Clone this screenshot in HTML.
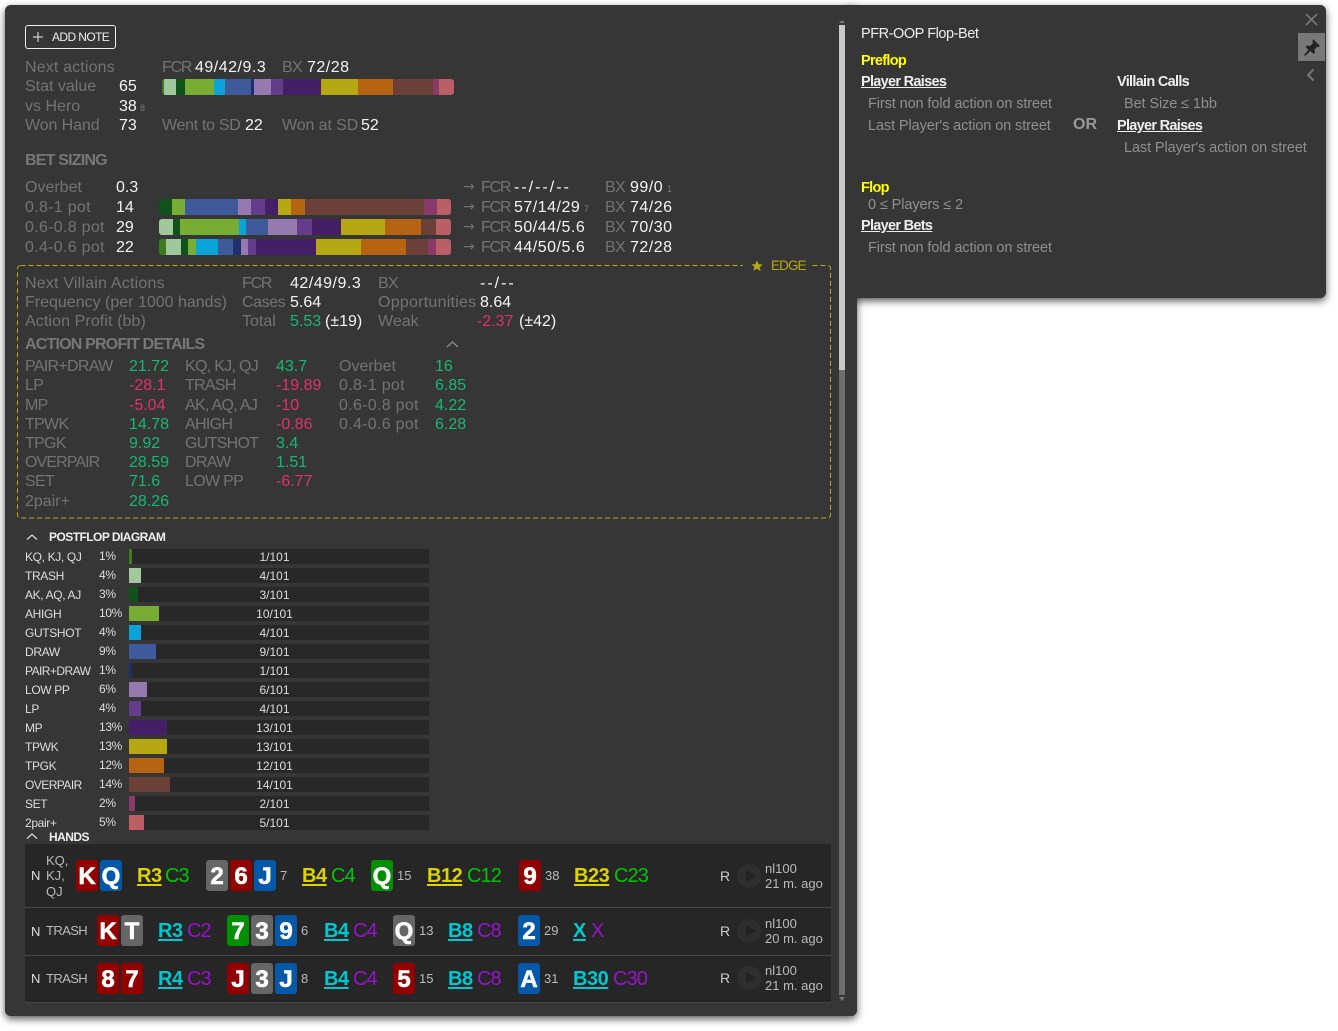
<!DOCTYPE html>
<html><head><meta charset="utf-8"><style>
html,body{margin:0;padding:0;background:#fff;width:1338px;height:1031px;overflow:hidden;font-family:"Liberation Sans",sans-serif}
.p{position:absolute;background:#363636}
.a,.t,.g,.w,.r,.n,.h,.l,.c,.k{position:absolute;white-space:nowrap;line-height:20px;height:20px}
.t,.g,.w,.r,.n{font-size:16px}
.g,.w,.r,.n,.h{margin-top:1px}
.g{color:#737373}.w{color:#f4f4f4}.r{color:#e0316c}.n{color:#16b873}
.q{letter-spacing:-.7px}.fc{letter-spacing:-1.2px}.x{letter-spacing:.5px}.o{letter-spacing:.3px}.da{letter-spacing:2px}
.ar{font-family:"DejaVu Sans",sans-serif;font-size:14px}
.h{font-size:16px;font-weight:bold;color:#777;letter-spacing:-.8px}
.l{font-size:12px;color:#ddd;letter-spacing:-.35px;margin-top:-1px}
.m{margin-top:0}
.hd{font-weight:bold;color:#eee;letter-spacing:-.55px;margin-top:0}
.a{background:#282828;height:15px;left:129px;width:300px}
.a i{position:absolute;left:0;top:0;height:15px;display:block}
.a span{position:absolute;left:0;width:291px;text-align:center;font-size:12px;line-height:17px;color:#ddd}
.b{position:absolute;height:16px;border-radius:3px;overflow:hidden;display:flex}
.b i{display:block;height:16px}
.c{width:22px;height:31px;line-height:33px;border-radius:3px;color:#fff;text-align:center;font-weight:bold;font-size:24px;-webkit-text-stroke:.6px #fff}
.cr{background:#930000}.cb{background:#0359a8}.cy{background:#666}.cg{background:#009000}
.k{font-size:20px;letter-spacing:-.5px}
.u{text-decoration:underline;font-weight:bold;text-underline-offset:2px}
.Y{color:#dcd400}.G{color:#00c800;letter-spacing:-.9px}.C{color:#00c8d0}.V{color:#9a10d0;letter-spacing:-.9px}
.s{position:absolute;white-space:nowrap;font-size:13px;line-height:16px;color:#bbb}
.d{position:absolute;left:737px;width:24px;height:24px;border-radius:12px;background:#2e2e2e}
.d:after{content:"";position:absolute;left:9px;top:6px;border-left:10px solid #222;border-top:6px solid transparent;border-bottom:6px solid transparent}
.R{position:absolute;white-space:nowrap;font-size:14.5px;line-height:20px;color:#8f8f8f;letter-spacing:-.1px;margin-top:1px}
.RB{position:absolute;white-space:nowrap;font-size:14.5px;line-height:20px;color:#eee;font-weight:bold;letter-spacing:-.7px;margin-top:1px}
</style></head><body>

<div class="p" style="left:5px;top:5px;width:852px;height:1011px;border-radius:6px;box-shadow:0 3px 8px rgba(0,0,0,.65)"></div>
<div class="p" style="left:846px;top:5px;width:480px;height:293px;border-radius:0 6px 6px 0;box-shadow:0 3px 8px rgba(0,0,0,.65)"></div>
<div class="p" style="left:5px;top:5px;width:852px;height:1011px;border-radius:6px"></div>
<div class="p" style="left:846px;top:5px;width:480px;height:293px;border-radius:0 6px 6px 0"></div>

<!-- scrollbar -->
<div style="position:absolute;left:839px;top:25px;width:6px;height:345px;background:#c8c8c8"></div>
<div style="position:absolute;left:839px;top:370px;width:6px;height:625px;background:#6e6e6e"></div>
<div style="position:absolute;left:839px;top:20px;border-left:3px solid transparent;border-right:3px solid transparent;border-bottom:3px solid #777"></div>
<div style="position:absolute;left:839px;top:997px;border-left:3px solid transparent;border-right:3px solid transparent;border-top:4px solid #777"></div>

<!-- add note -->
<div style="position:absolute;left:25px;top:25px;width:89px;height:22px;border:1px solid #eee;border-radius:3px"></div>
<svg style="position:absolute;left:32px;top:31px" width="12" height="12"><path d="M6 1v10M1 6h10" stroke="#ccc" stroke-width="1.2"/></svg>
<div class="t" style="left:52px;top:27px;font-size:12px;color:#eee;letter-spacing:-.6px">ADD NOTE</div>

<div class="g" style="left:25px;top:57px;letter-spacing:.15px">Next actions</div>
<div class="g" style="left:25px;top:76px">Stat value</div>
<div class="g" style="left:25px;top:96px">vs Hero</div>
<div class="g" style="left:25px;top:115px;letter-spacing:-.1px">Won Hand</div>
<div class="w" style="left:119px;top:76px">65</div>
<div class="w" style="left:119px;top:96px">38</div>
<div class="t" style="left:140px;top:98px;font-size:9px;color:#777">8</div>
<div class="w" style="left:119px;top:115px">73</div>
<div class="g fc" style="left:162px;top:57px">FCR</div><div class="w x" style="left:195px;top:57px">49/42/9.3</div>
<div class="g q" style="left:282px;top:57px">BX</div><div class="w x" style="left:307px;top:57px">72/28</div>
<div class="g" style="left:162px;top:115px;letter-spacing:-.3px">Went to SD</div><div class="w" style="left:245px;top:115px">22</div>
<div class="g" style="left:282px;top:115px;letter-spacing:-.1px">Won at SD</div><div class="w" style="left:361px;top:115px">52</div>

<div class="b" style="left:162px;top:79px;width:292px">
<i style="width:2px;background:#3d7c1e"></i><i style="width:12px;background:#a0c89c"></i><i style="width:9px;background:#10521a"></i><i style="width:29px;background:#77ad32"></i><i style="width:11px;background:#0aa4d9"></i><i style="width:26px;background:#3f5a9b"></i><i style="width:3px;background:#1f2f6e"></i><i style="width:17px;background:#9679ae"></i><i style="width:12px;background:#633c8a"></i><i style="width:38px;background:#441e66"></i><i style="width:37px;background:#b5a812"></i><i style="width:35px;background:#b76412"></i><i style="width:40px;background:#6a4038"></i><i style="width:6px;background:#8a3a68"></i><i style="width:15px;background:#bb5f66"></i>
</div>

<div class="h" style="left:25px;top:150px">BET SIZING</div>
<div class="g" style="left:25px;top:177px">Overbet</div><div class="w" style="left:116px;top:177px">0.3</div>
<div class="g o" style="left:25px;top:197px">0.8-1 pot</div><div class="w" style="left:116px;top:197px">14</div>
<div class="g o" style="left:25px;top:217px">0.6-0.8 pot</div><div class="w" style="left:116px;top:217px">29</div>
<div class="g o" style="left:25px;top:237px">0.4-0.6 pot</div><div class="w" style="left:116px;top:237px">22</div>

<div class="b" style="left:159px;top:199px;width:292px">
<i style="width:13px;background:#10521a"></i><i style="width:13px;background:#77ad32"></i><i style="width:53px;background:#3f5a9b"></i><i style="width:13px;background:#9679ae"></i><i style="width:14px;background:#633c8a"></i><i style="width:13px;background:#441e66"></i><i style="width:13px;background:#b5a812"></i><i style="width:14px;background:#b76412"></i><i style="width:119px;background:#6a4038"></i><i style="width:13px;background:#8a3a68"></i><i style="width:14px;background:#bb5f66"></i>
</div>
<div class="b" style="left:159px;top:219px;width:292px">
<i style="width:14px;background:#a0c89c"></i><i style="width:7px;background:#10521a"></i><i style="width:59px;background:#77ad32"></i><i style="width:7px;background:#0aa4d9"></i><i style="width:22px;background:#3f5a9b"></i><i style="width:29px;background:#9679ae"></i><i style="width:15px;background:#633c8a"></i><i style="width:29px;background:#441e66"></i><i style="width:44px;background:#b5a812"></i><i style="width:36px;background:#b76412"></i><i style="width:15px;background:#6a4038"></i><i style="width:15px;background:#bb5f66"></i>
</div>
<div class="b" style="left:159px;top:239px;width:292px">
<i style="width:7px;background:#3d7c1e"></i><i style="width:15px;background:#a0c89c"></i><i style="width:7px;background:#10521a"></i><i style="width:8px;background:#77ad32"></i><i style="width:22px;background:#0aa4d9"></i><i style="width:15px;background:#3f5a9b"></i><i style="width:8px;background:#1f2f6e"></i><i style="width:7px;background:#9679ae"></i><i style="width:8px;background:#633c8a"></i><i style="width:60px;background:#441e66"></i><i style="width:45px;background:#b5a812"></i><i style="width:45px;background:#b76412"></i><i style="width:22px;background:#6a4038"></i><i style="width:8px;background:#8a3a68"></i><i style="width:15px;background:#bb5f66"></i>
</div>

<div class="g ar" style="left:463px;top:176px">→</div><div class="g fc" style="left:481px;top:177px">FCR</div><div class="w da" style="left:514px;top:177px">--/--/--</div>
<div class="g ar" style="left:463px;top:196px">→</div><div class="g fc" style="left:481px;top:197px">FCR</div><div class="w x" style="left:514px;top:197px">57/14/29</div>
<div class="t" style="left:584px;top:199px;font-size:9px;color:#777">7</div>
<div class="g ar" style="left:463px;top:216px">→</div><div class="g fc" style="left:481px;top:217px">FCR</div><div class="w x" style="left:514px;top:217px">50/44/5.6</div>
<div class="g ar" style="left:463px;top:236px">→</div><div class="g fc" style="left:481px;top:237px">FCR</div><div class="w x" style="left:514px;top:237px">44/50/5.6</div>
<div class="g q" style="left:605px;top:177px">BX</div><div class="w x" style="left:630px;top:177px">99/0</div>
<div class="t" style="left:667px;top:179px;font-size:9px;color:#777">1</div>
<div class="g q" style="left:605px;top:197px">BX</div><div class="w x" style="left:630px;top:197px">74/26</div>
<div class="g q" style="left:605px;top:217px">BX</div><div class="w x" style="left:630px;top:217px">70/30</div>
<div class="g q" style="left:605px;top:237px">BX</div><div class="w x" style="left:630px;top:237px">72/28</div>

<!-- edge box -->
<svg style="position:absolute;left:0;top:0" width="840" height="530"><rect x="17.500" y="265.500" width="813" height="252.500" rx="3" fill="none" stroke="#b5a812" stroke-dasharray="5 3"/></svg>
<div class="p" style="left:743px;top:258px;width:69px;height:16px"></div>
<svg style="position:absolute;left:751px;top:260px" width="12" height="12" viewBox="0 0 12 12"><path d="M6 .5l1.700 3.600 3.900.5-2.900 2.700.8 3.900L6 8.800l-3.500 1.900.8-3.900L.4 4.600l3.900-.5z" fill="#b5a812"/></svg>
<div class="t" style="left:771px;top:256px;font-size:13.5px;color:#b5a812;letter-spacing:-.9px">EDGE</div>

<div class="g" style="left:25px;top:273px;letter-spacing:.2px">Next Villain Actions</div>
<div class="g" style="left:25px;top:292px">Frequency (per 1000 hands)</div>
<div class="g" style="left:25px;top:311px;letter-spacing:.1px">Action Profit (bb)</div>
<div class="g fc" style="left:242px;top:273px">FCR</div><div class="w x" style="left:290px;top:273px">42/49/9.3</div>
<div class="g" style="left:242px;top:292px;letter-spacing:-.4px">Cases</div><div class="w" style="left:290px;top:292px">5.64</div>
<div class="g" style="left:242px;top:311px">Total</div><div class="n" style="left:290px;top:311px">5.53</div><div class="w" style="left:325px;top:311px">(±19)</div>
<div class="g q" style="left:378px;top:273px">BX</div><div class="w da" style="left:480px;top:273px">--/--</div>
<div class="g" style="left:378px;top:292px;letter-spacing:.25px">Opportunities</div><div class="w" style="left:480px;top:292px">8.64</div>
<div class="g" style="left:378px;top:311px">Weak</div><div class="r" style="left:477px;top:311px">-2.37</div><div class="w" style="left:519px;top:311px">(±42)</div>

<div class="h" style="left:25px;top:334px">ACTION PROFIT DETAILS</div>
<svg style="position:absolute;left:446px;top:340px" width="13" height="9"><path d="M1 7l5.500-5 5.500 5" fill="none" stroke="#888" stroke-width="1.500"/></svg>

<div class="g q" style="left:25px;top:356px">PAIR+DRAW</div><div class="n" style="left:129px;top:356px">21.72</div>
<div class="g q" style="left:25px;top:375px">LP</div><div class="r" style="left:129px;top:375px">-28.1</div>
<div class="g q" style="left:25px;top:395px">MP</div><div class="r" style="left:129px;top:395px">-5.04</div>
<div class="g q" style="left:25px;top:414px">TPWK</div><div class="n" style="left:129px;top:414px">14.78</div>
<div class="g q" style="left:25px;top:433px">TPGK</div><div class="n" style="left:129px;top:433px">9.92</div>
<div class="g q" style="left:25px;top:452px;letter-spacing:-.9px">OVERPAIR</div><div class="n" style="left:129px;top:452px">28.59</div>
<div class="g q" style="left:25px;top:471px">SET</div><div class="n" style="left:129px;top:471px">71.6</div>
<div class="g" style="left:25px;top:491px">2pair+</div><div class="n" style="left:129px;top:491px">28.26</div>

<div class="g q" style="left:185px;top:356px">KQ, KJ, QJ</div><div class="n" style="left:276px;top:356px">43.7</div>
<div class="g q" style="left:185px;top:375px">TRASH</div><div class="r" style="left:276px;top:375px">-19.89</div>
<div class="g q" style="left:185px;top:395px">AK, AQ, AJ</div><div class="r" style="left:276px;top:395px">-10</div>
<div class="g q" style="left:185px;top:414px">AHIGH</div><div class="r" style="left:276px;top:414px">-0.86</div>
<div class="g q" style="left:185px;top:433px">GUTSHOT</div><div class="n" style="left:276px;top:433px">3.4</div>
<div class="g q" style="left:185px;top:452px">DRAW</div><div class="n" style="left:276px;top:452px">1.51</div>
<div class="g q" style="left:185px;top:471px">LOW PP</div><div class="r" style="left:276px;top:471px">-6.77</div>

<div class="g" style="left:339px;top:356px">Overbet</div><div class="n" style="left:435px;top:356px">16</div>
<div class="g o" style="left:339px;top:375px">0.8-1 pot</div><div class="n" style="left:435px;top:375px">6.85</div>
<div class="g o" style="left:339px;top:395px">0.6-0.8 pot</div><div class="n" style="left:435px;top:395px">4.22</div>
<div class="g o" style="left:339px;top:414px">0.4-0.6 pot</div><div class="n" style="left:435px;top:414px">6.28</div>

<!-- diagram -->
<svg style="position:absolute;left:26px;top:533px" width="12" height="8"><path d="M1 6.500l5-4.500 5 4.500" fill="none" stroke="#ddd" stroke-width="1.200"/></svg>
<div class="l hd" style="left:49px;top:527px">POSTFLOP DIAGRAM</div>

<div class="l m" style="left:25px;top:547px">KQ, KJ, QJ</div><div class="l" style="left:99px;top:547px">1%</div><div class="a" style="top:549px"><i style="width:3px;background:#3d7c1e"></i><span>1/101</span></div>
<div class="l m" style="left:25px;top:566px">TRASH</div><div class="l" style="left:99px;top:566px">4%</div><div class="a" style="top:568px"><i style="width:12px;background:#a0c89c"></i><span>4/101</span></div>
<div class="l m" style="left:25px;top:585px">AK, AQ, AJ</div><div class="l" style="left:99px;top:585px">3%</div><div class="a" style="top:587px"><i style="width:9px;background:#10521a"></i><span>3/101</span></div>
<div class="l m" style="left:25px;top:604px">AHIGH</div><div class="l" style="left:99px;top:604px">10%</div><div class="a" style="top:606px"><i style="width:30px;background:#77ad32"></i><span>10/101</span></div>
<div class="l m" style="left:25px;top:623px">GUTSHOT</div><div class="l" style="left:99px;top:623px">4%</div><div class="a" style="top:625px"><i style="width:12px;background:#0aa4d9"></i><span>4/101</span></div>
<div class="l m" style="left:25px;top:642px">DRAW</div><div class="l" style="left:99px;top:642px">9%</div><div class="a" style="top:644px"><i style="width:27px;background:#3f5a9b"></i><span>9/101</span></div>
<div class="l m" style="left:25px;top:661px;letter-spacing:-.55px">PAIR+DRAW</div><div class="l" style="left:99px;top:661px">1%</div><div class="a" style="top:663px"><i style="width:3px;background:#1f2f6e"></i><span>1/101</span></div>
<div class="l m" style="left:25px;top:680px">LOW PP</div><div class="l" style="left:99px;top:680px">6%</div><div class="a" style="top:682px"><i style="width:18px;background:#9679ae"></i><span>6/101</span></div>
<div class="l m" style="left:25px;top:699px">LP</div><div class="l" style="left:99px;top:699px">4%</div><div class="a" style="top:701px"><i style="width:12px;background:#633c8a"></i><span>4/101</span></div>
<div class="l m" style="left:25px;top:718px">MP</div><div class="l" style="left:99px;top:718px">13%</div><div class="a" style="top:720px"><i style="width:38px;background:#441e66"></i><span>13/101</span></div>
<div class="l m" style="left:25px;top:737px">TPWK</div><div class="l" style="left:99px;top:737px">13%</div><div class="a" style="top:739px"><i style="width:38px;background:#b5a812"></i><span>13/101</span></div>
<div class="l m" style="left:25px;top:756px">TPGK</div><div class="l" style="left:99px;top:756px">12%</div><div class="a" style="top:758px"><i style="width:35px;background:#b76412"></i><span>12/101</span></div>
<div class="l m" style="left:25px;top:775px;letter-spacing:-.55px">OVERPAIR</div><div class="l" style="left:99px;top:775px">14%</div><div class="a" style="top:777px"><i style="width:41px;background:#6a4038"></i><span>14/101</span></div>
<div class="l m" style="left:25px;top:794px">SET</div><div class="l" style="left:99px;top:794px">2%</div><div class="a" style="top:796px"><i style="width:6px;background:#8a3a68"></i><span>2/101</span></div>
<div class="l m" style="left:25px;top:813px">2pair+</div><div class="l" style="left:99px;top:813px">5%</div><div class="a" style="top:815px"><i style="width:15px;background:#bb5f66"></i><span>5/101</span></div>

<svg style="position:absolute;left:26px;top:832px" width="12" height="8"><path d="M1 6.500l5-4.500 5 4.500" fill="none" stroke="#ddd" stroke-width="1.200"/></svg>
<div class="l hd" style="left:49px;top:827px">HANDS</div>

<!-- hands -->
<div style="position:absolute;left:25px;top:844px;width:806px;height:63px;background:#262626"></div>
<div style="position:absolute;left:25px;top:908px;width:806px;height:47px;background:#262626"></div>
<div style="position:absolute;left:25px;top:956px;width:806px;height:46px;background:#262626"></div>
<div style="position:absolute;left:25px;top:907px;width:806px;height:1px;background:#444"></div>
<div style="position:absolute;left:25px;top:955px;width:806px;height:1px;background:#444"></div>
<div style="position:absolute;left:25px;top:1002px;width:806px;height:1px;background:#444"></div>

<div class="s" style="left:31px;top:868px;color:#ddd">N</div>
<div class="s" style="left:46px;top:853px">KQ,</div><div class="s" style="left:46px;top:868px">KJ,</div><div class="s" style="left:46px;top:884px">QJ</div>
<div class="c cr" style="left:76px;top:860px">K</div><div class="c cb" style="left:100px;top:860px">Q</div>
<div class="k Y u" style="left:137px;top:866px">R3</div><div class="k G" style="left:165px;top:866px">C3</div>
<div class="c cy" style="left:206px;top:860px">2</div><div class="c cr" style="left:230px;top:860px">6</div><div class="c cb" style="left:254px;top:860px">J</div>
<div class="s" style="left:280px;top:868px">7</div>
<div class="k Y u" style="left:302px;top:866px">B4</div><div class="k G" style="left:331px;top:866px">C4</div>
<div class="c cg" style="left:371px;top:860px">Q</div><div class="s" style="left:397px;top:868px">15</div>
<div class="k Y u" style="left:427px;top:866px">B12</div><div class="k G" style="left:467px;top:866px">C12</div>
<div class="c cr" style="left:519px;top:860px">9</div><div class="s" style="left:545px;top:868px">38</div>
<div class="k Y u" style="left:574px;top:866px">B23</div><div class="k G" style="left:614px;top:866px">C23</div>
<div class="s" style="left:720px;top:868px;font-size:14px;color:#ccc">R</div><div class="d" style="top:864px"></div>
<div class="s" style="left:765px;top:861px">nl100</div><div class="s" style="left:765px;top:876px">21 m. ago</div>

<div class="s" style="left:31px;top:924px;color:#ddd">N</div><div class="s" style="left:46px;top:923px;letter-spacing:-.6px">TRASH</div>
<div class="c cr" style="left:97px;top:915px">K</div><div class="c cy" style="left:121px;top:915px">T</div>
<div class="k C u" style="left:158px;top:921px">R3</div><div class="k V" style="left:187px;top:921px">C2</div>
<div class="c cg" style="left:227px;top:915px">7</div><div class="c cy" style="left:251px;top:915px">3</div><div class="c cb" style="left:275px;top:915px">9</div>
<div class="s" style="left:301px;top:923px">6</div>
<div class="k C u" style="left:324px;top:921px">B4</div><div class="k V" style="left:353px;top:921px">C4</div>
<div class="c cy" style="left:393px;top:915px">Q</div><div class="s" style="left:419px;top:923px">13</div>
<div class="k C u" style="left:448px;top:921px">B8</div><div class="k V" style="left:477px;top:921px">C8</div>
<div class="c cb" style="left:518px;top:915px">2</div><div class="s" style="left:544px;top:923px">29</div>
<div class="k C u" style="left:573px;top:921px">X</div><div class="k V" style="left:591px;top:921px">X</div>
<div class="s" style="left:720px;top:923px;font-size:14px;color:#ccc">R</div><div class="d" style="top:919px"></div>
<div class="s" style="left:765px;top:916px">nl100</div><div class="s" style="left:765px;top:931px">20 m. ago</div>

<div class="s" style="left:31px;top:971px;color:#ddd">N</div><div class="s" style="left:46px;top:971px;letter-spacing:-.6px">TRASH</div>
<div class="c cr" style="left:97px;top:963px">8</div><div class="c cr" style="left:121px;top:963px">7</div>
<div class="k C u" style="left:158px;top:969px">R4</div><div class="k V" style="left:187px;top:969px">C3</div>
<div class="c cr" style="left:227px;top:963px">J</div><div class="c cy" style="left:251px;top:963px">3</div><div class="c cb" style="left:275px;top:963px">J</div>
<div class="s" style="left:301px;top:971px">8</div>
<div class="k C u" style="left:324px;top:969px">B4</div><div class="k V" style="left:353px;top:969px">C4</div>
<div class="c cr" style="left:393px;top:963px">5</div><div class="s" style="left:419px;top:971px">15</div>
<div class="k C u" style="left:448px;top:969px">B8</div><div class="k V" style="left:477px;top:969px">C8</div>
<div class="c cb" style="left:518px;top:963px">A</div><div class="s" style="left:544px;top:971px">31</div>
<div class="k C u" style="left:573px;top:969px">B30</div><div class="k V" style="left:613px;top:969px">C30</div>
<div class="s" style="left:720px;top:970px;font-size:14px;color:#ccc">R</div><div class="d" style="top:966px"></div>
<div class="s" style="left:765px;top:963px">nl100</div><div class="s" style="left:765px;top:978px">21 m. ago</div>

<!-- right panel -->
<div class="R" style="left:861px;top:23px;color:#eee;letter-spacing:-.45px">PFR-OOP Flop-Bet</div>
<div class="RB" style="left:861px;top:50px;color:#ff0">Preflop</div>
<div class="RB" style="left:861px;top:71px;text-decoration:underline">Player Raises</div>
<div class="R" style="left:868px;top:93px">First non fold action on street</div>
<div class="R" style="left:868px;top:115px">Last Player's action on street</div>
<div class="RB" style="left:1073px;top:114px;font-size:16px;color:#999;letter-spacing:0">OR</div>
<div class="RB" style="left:1117px;top:71px">Villain Calls</div>
<div class="R" style="left:1124px;top:93px">Bet Size ≤ 1bb</div>
<div class="RB" style="left:1117px;top:115px;text-decoration:underline">Player Raises</div>
<div class="R" style="left:1124px;top:137px">Last Player's action on street</div>
<div class="RB" style="left:861px;top:177px;color:#ff0">Flop</div>
<div class="R" style="left:868px;top:194px">0 ≤ Players ≤ 2</div>
<div class="RB" style="left:861px;top:215px;text-decoration:underline">Player Bets</div>
<div class="R" style="left:868px;top:237px">First non fold action on street</div>

<svg style="position:absolute;left:1305px;top:13px" width="13" height="13"><path d="M1 1l11 11M12 1L1 12" stroke="#808080" stroke-width="1.500"/></svg>
<div style="position:absolute;left:1298px;top:33px;width:27px;height:28px;background:#787878"></div>
<svg style="position:absolute;left:1303px;top:38px" width="18" height="18" viewBox="0 0 18 18"><path d="M10 1l7 7-1.500 1-1-.5-3 3 .5 3-1.500 1.500-3-3L2 18l-1-1 4.500-5-3-3 1.500-1.500 3 .5 3-3-.5-1z" fill="#222"/></svg>
<svg style="position:absolute;left:1306px;top:68px" width="10" height="14"><path d="M7.500 1.500L2 7l5.500 5.500" fill="none" stroke="#777" stroke-width="2"/></svg>

</body></html>
